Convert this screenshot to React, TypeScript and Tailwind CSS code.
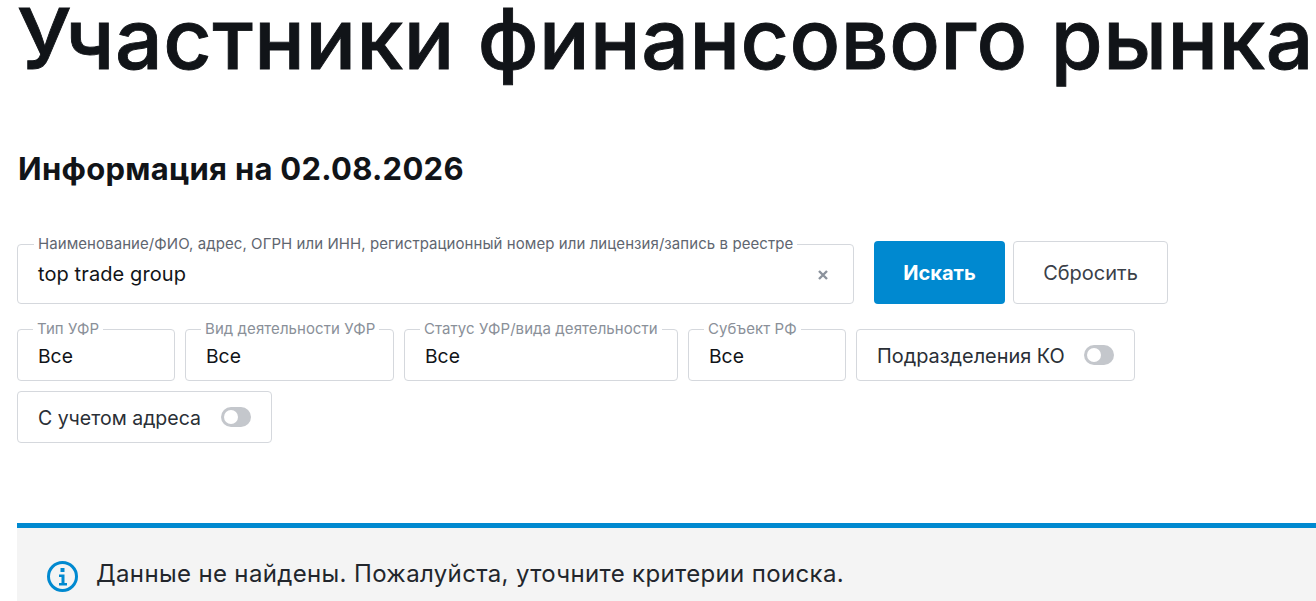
const filters = [
  { label: "Тип УФР", width: "w-[158px]" },
  { label: "Вид деятельности УФР", width: "w-[209px]" },
  { label: "Статус УФР/вида деятельности", width: "w-[274px]" },
  { label: "Субъект РФ", width: "w-[158px]" },
];

function Toggle() {
  return (
    <span className="flex h-[20px] w-[30px] items-center rounded-full bg-[#c4c7cc] pl-[3px]">
      <span className="h-[14px] w-[14px] rounded-full bg-white" />
    </span>
  );
}

export default function App() {
  return (
    <div className="h-[601px] w-[1316px] overflow-hidden bg-white pl-[17px] font-['Inter',sans-serif] text-[#111418]">
      <h1 className="whitespace-nowrap text-[84px] font-medium leading-[78px] tracking-[0.55px] [-webkit-text-stroke:0.9px_#111418]">
        Участники финансового рынка
      </h1>
      <h2 className="ml-[1px] mt-[72px] text-[31px] font-bold leading-[38px] tracking-[0.27px]">Информация на 02.08.2026</h2>

      <div className="mt-[53px] flex items-start">
        <div className="relative mt-[3px] flex h-[60px] w-[837px] items-center justify-between rounded-[4px] border border-[#d5d8dd] pl-[20px] pr-[25px] text-[20px] tracking-[0.1px]">
          <span className="absolute left-[16px] top-[-9px] bg-white px-[4px] text-[15px] leading-[16px] tracking-[0.07px] text-[#5f6670]">
            Наименование/ФИО, адрес, ОГРН или ИНН, регистрационный номер или лицензия/запись в реестре
          </span>
          top trade group
          <svg width="10" height="10" viewBox="0 0 10 10" className="mt-[1px]">
            <path d="M1 1l8 8M9 1l-8 8" stroke="#8b929c" strokeWidth="2.4" />
          </svg>
        </div>
        <button className="ml-[20px] h-[63px] w-[131px] rounded-[4px] bg-[#0089d0] text-[20px] font-bold text-white">
          Искать
        </button>
        <button className="ml-[8px] h-[63px] w-[155px] rounded-[4px] border border-[#d5d8dd] text-[20px] text-[#3a4048]">
          Сбросить
        </button>
      </div>

      <div className="mt-[25px] flex flex-wrap gap-x-[10px] gap-y-[10px]">
        {filters.map((f) => (
          <div
            key={f.label}
            className={`relative flex h-[52px] items-center rounded-[4px] border border-[#d5d8dd] pl-[20px] pt-[3px] text-[19.3px] ${f.width}`}
          >
            <span className="absolute left-[15px] top-[-9px] whitespace-nowrap bg-white px-[4px] text-[15px] leading-[16px] tracking-[0.07px] text-[#8a9099]">
              {f.label}
            </span>
            Все
          </div>
        ))}
        <div className="flex h-[52px] w-[279px] items-center justify-between rounded-[4px] border border-[#d5d8dd] pl-[20px] pr-[20px] text-[19.9px] text-[#2a2f36]">
          <span className="pt-[3px]">Подразделения КО</span>
          <Toggle />
        </div>
        <div className="flex h-[52px] w-[255px] items-center justify-between rounded-[4px] border border-[#d5d8dd] pl-[20px] pr-[20px] text-[19.5px] text-[#2a2f36]">
          <span className="pt-[3px]">С учетом адреса</span>
          <Toggle />
        </div>
      </div>

      <div className="mt-[80px] flex h-[100px] items-start gap-[18px] border-t-[5px] border-[#0089d0] bg-[#f4f4f4] pl-[30px] pt-[29px] text-[24px] tracking-[0.35px] text-[#22262c]">
        <svg width="31" height="31" viewBox="0 0 31 31" fill="none" className="mt-[4px]">
          <circle cx="15.5" cy="15.5" r="14" stroke="#0089d0" strokeWidth="3" />
          <rect x="13.5" y="7" width="4" height="4" fill="#0089d0" />
          <path d="M12 13.5h5.5V22H20v2.5h-8V22h2.5v-6H12z" fill="#0089d0" />
        </svg>
        <span className="leading-[34px]">Данные не найдены. Пожалуйста, уточните критерии поиска.</span>
      </div>
    </div>
  );
}
